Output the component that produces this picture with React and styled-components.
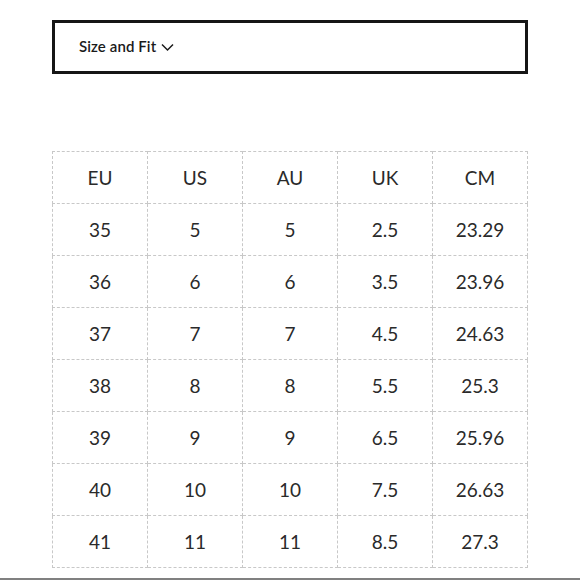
import styled, { createGlobalStyle } from "styled-components";

const GlobalStyle = createGlobalStyle`
  html, body {
    margin: 0;
    padding: 0;
    background: #ffffff;
  }
  body {
    font-family: Lato, "Liberation Sans", sans-serif;
    color: #222222;
  }
`;

const sizes = [
  ["35", "5", "5", "2.5", "23.29"],
  ["36", "6", "6", "3.5", "23.96"],
  ["37", "7", "7", "4.5", "24.63"],
  ["38", "8", "8", "5.5", "25.3"],
  ["39", "9", "9", "6.5", "25.96"],
  ["40", "10", "10", "7.5", "26.63"],
  ["41", "11", "11", "8.5", "27.3"],
];

const headings = ["EU", "US", "AU", "UK", "CM"];

const App = () => {
  return (
    <Page>
      <GlobalStyle />
      <Content>
        <Dropdown>
          <DropdownLabel>Size and Fit</DropdownLabel>
          <Chevron width="13" height="9" viewBox="0 0 13 9">
            <polyline points="1,1.5 6.5,7 12,1.5" fill="none" stroke="#1a1a1a" strokeWidth="1.5" />
          </Chevron>
        </Dropdown>
        <SizeTable>
          <tbody>
            <tr>
              {headings.map(h => <Cell key={h}>{h}</Cell>)}
            </tr>
            {sizes.map(row => (
              <tr key={row[0]}>
                {row.map((v, i) => <Cell key={i}>{v}</Cell>)}
              </tr>
            ))}
          </tbody>
        </SizeTable>
      </Content>
      <BottomRule />
    </Page>
  );
};

const Page = styled.div`
  display: flex;
  flex-direction: column;
  height: 580px;
  width: 580px;
  overflow: hidden;
`;

const Content = styled.div`
  display: flex;
  flex-direction: column;
  padding: 20px 52px 0 52px;
`;

const Dropdown = styled.div`
  display: flex;
  align-items: center;
  gap: 5px;
  height: 54px;
  box-sizing: border-box;
  border: 3px solid #161616;
  padding: 0 0 2px 24px;
`;

const DropdownLabel = styled.span`
  font-size: 15px;
  font-weight: 600;
  color: #1a1a1a;
  letter-spacing: 0.1px;
`;

const Chevron = styled.svg`
  display: block;
  margin-top: 2px;
`;

const SizeTable = styled.table`
  margin-top: 77px;
  width: 476px;
  border-collapse: collapse;
  table-layout: fixed;
`;

const Cell = styled.td`
  height: 51px;
  padding: 0;
  border: 1px dashed #c8c8c8;
  text-align: center;
  vertical-align: middle;
  font-size: 19px;
  font-weight: 400;
  color: #2a2a2a;
`;

const BottomRule = styled.div`
  margin-top: auto;
  height: 2px;
  background: #808080;
`;

export default App;
